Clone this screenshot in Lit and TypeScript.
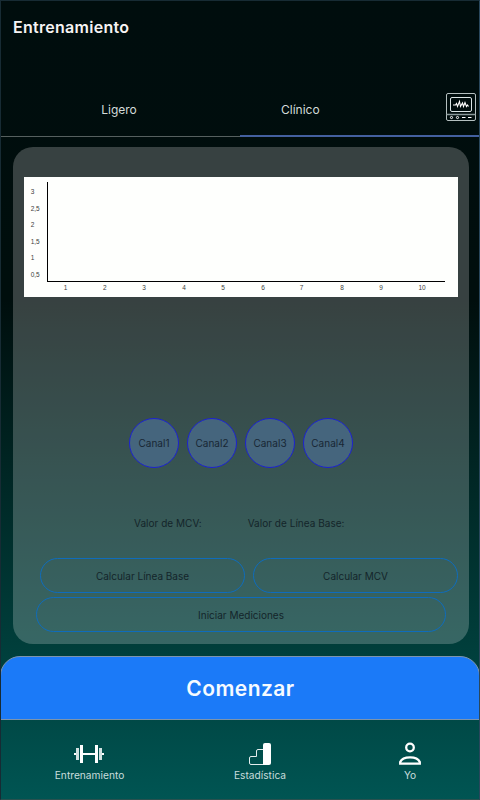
import { LitElement, html, svg, css } from "lit";
import { customElement } from "lit/decorators.js";

const channels = ["Canal1", "Canal2", "Canal3", "Canal4"];
const yTicks = [
  { label: "3", y: 17 },
  { label: "2,5", y: 34 },
  { label: "2", y: 50 },
  { label: "1,5", y: 67 },
  { label: "1", y: 83 },
  { label: "0,5", y: 100 },
];
const xTicks = [41.5, 80.8, 120, 160, 199, 239, 277.5, 318, 357, 398];

@customElement("training-chart")
export class TrainingChart extends LitElement {
  static styles = css`
    :host { display: block; height: 120px; background: #fefffd; }
    svg { display: block; }
    text { font: 500 6.5px "Liberation Sans", sans-serif; fill: #3c3c3c; }
    .axis { fill: #000; }
    .x { text-anchor: middle; }
  `;

  render() {
    return html`<svg width="434" height="120" viewBox="0 0 434 120">
      <rect class="axis" x="23" y="5" width="1" height="100"></rect>
      <rect class="axis" x="23" y="104" width="398" height="1"></rect>
      ${yTicks.map((t) => svg`<text x="6.7" y=${t.y}>${t.label}</text>`)}
      ${xTicks.map((x, i) => svg`<text class="x" x=${x} y="113">${i + 1}</text>`)}
    </svg>`;
  }
}

@customElement("app-root")
export class AppRoot extends LitElement {
  static styles = css`
    :host {
      display: flex;
      flex-direction: column;
      box-sizing: border-box;
      width: 480px;
      height: 800px;
      overflow: hidden;
      position: relative;
      font-family: Inter, sans-serif;
      color: #fff;
      background: linear-gradient(#000d0d 0, #000e0d 300px, #003d3a 640px, #005553 800px);
    }
    .frame {
      position: absolute;
      inset: 0;
      pointer-events: none;
      border: 1px solid #172b34;
      border-right-color: #29475c;
      border-bottom-color: #29514f;
    }
    * { box-sizing: border-box; }
    svg { display: block; }
    h1 {
      margin: 0;
      height: 83px;
      padding: 17px 13px 0;
      font-size: 16px;
      line-height: 20px;
      font-weight: 600;
      letter-spacing: 0.28px;
      color: #f6f3f3;
    }
    .tabs { display: flex; height: 54px; }
    .tab {
      width: 240px;
      display: flex;
      align-items: center;
      justify-content: center;
      font-size: 12px;
      color: #d3dcda;
      border-bottom: 1px solid #56605f;
    }
    .tab.left { padding-right: 2px; }
    .tab.active {
      border-bottom: 2px solid #43609f;
      justify-content: space-between;
      padding: 1px 4px 0 41px;
    }
    .tab svg { margin-bottom: 6px; }
    .card {
      margin: 10px 11px 0 13px;
      padding: 30px 11px 0;
      height: 497px;
      border-radius: 20px;
      background: rgba(255, 255, 255, 0.215);
      display: flex;
      flex-direction: column;
      color: #14252a;
      font-size: 10px;
    }
    .channels { display: flex; gap: 8px; margin: 121px 0 0 105px; }
    .channel {
      width: 50px;
      height: 50px;
      border: 1px solid #1c22d0;
      border-radius: 50%;
      background: #45657d;
      display: flex;
      align-items: center;
      justify-content: center;
      color: #182734;
      letter-spacing: 0.03px;
    }
    .values { display: flex; gap: 46px; margin: 48px 0 0 110px; line-height: 15px; white-space: nowrap; letter-spacing: 0.03px; }
    .row { display: flex; gap: 8px; margin: 27px 0 0 16px; }
    .pill {
      height: 35px;
      border: 1px solid #0f6cbc;
      border-radius: 18px;
      display: flex;
      align-items: center;
      justify-content: center;
      width: 205px;
      padding-top: 1px;
    }
    .wide { width: 410px; margin: 4px 0 0 12px; }
    .start {
      margin-top: 12px;
      height: 64px;
      border: 1px solid #7d94ad;
      border-radius: 20px 20px 0 0;
      background: #1b7af8;
      display: flex;
      align-items: center;
      justify-content: center;
      font-size: 21px;
      font-weight: 600;
      letter-spacing: 0.45px;
      padding-left: 1px;
      color: #f6fbff;
    }
    nav { display: grid; grid-template-columns: 179px 162px 138px; height: 80px; }
    .item {
      display: flex;
      flex-direction: column;
      align-items: center;
      padding-top: 22px;
      font-size: 10.2px;
      line-height: 14px;
      color: #c8dddc;
    }
    .item svg { margin-bottom: 2px; }
    .item .dumbbell { margin-right: 2px; }
  `;

  render() {
    return html`
      <h1>Entrenamiento</h1>
      <div class="tabs">
        <div class="tab left">Ligero</div>
        <div class="tab active">
          <span>Clínico</span>
          <svg width="30" height="28" viewBox="0 0 30 28" fill="none" stroke="#dbe5e5">
            <rect x=".5" y=".5" width="29" height="27" rx="1.5" stroke="#b4bfbf"></rect>
            <rect x="4.5" y="4.5" width="21" height="14" rx="1.5"></rect>
            <path d="M.5 21.5h29" stroke="#89999a" stroke-width="1.5"></path>
            <path d="M7 12h2.500l1-1.500 1 3 2-5 1 5 2-3.500 1 3.500 1.500-4 1.500 4 1-1.500 1 1.500" stroke="#fff" stroke-width="1.100"></path>
            <circle cx="5.500" cy="24.500" r="1.100" stroke="#fff"></circle>
            <circle cx="11.500" cy="24.500" r="1.100" stroke="#fff"></circle>
            <path d="M16 24.500h3.500M22 24.500h3.500" stroke="#fff"></path>
          </svg>
        </div>
      </div>
      <section class="card">
        <training-chart></training-chart>
        <div class="channels">${channels.map((c) => html`<div class="channel">${c}</div>`)}</div>
        <div class="values"><span>Valor de MCV:</span><span>Valor de Línea Base:</span></div>
        <div class="row">
          <div class="pill">Calcular Línea Base</div>
          <div class="pill">Calcular MCV</div>
        </div>
        <div class="pill wide">Iniciar Mediciones</div>
      </section>
      <div class="start">Comenzar</div>
      <nav>
        <div class="item">
          <svg class="dumbbell" width="30" height="24" viewBox="0 0 30 24" fill="#fff">
            <path d="M6 3h3v18H6zM21 3h3v18h-3zM9 11h12v2H9zM0 11h2v2H0zM28 11h2v2h-2z"></path>
            <path d="M2 6h3v12H2zM25 6h3v12h-3z" fill="#d2e1e1"></path>
          </svg>
          <span>Entrenamiento</span>
        </div>
        <div class="item">
          <svg width="22" height="24" viewBox="0 0 22 24">
            <path d="M.5 21V16Q.5 14.500 2 14.500H7.500V9Q7.500 7.500 9 7.500H14.500M.5 21Q.5 22.500 2 22.500H15" fill="none" stroke="#e4eeee"></path>
            <path d="M14 23V3Q14 1 16 1h4q2 0 2 2v18q0 2-2 2z" fill="#fff"></path>
          </svg>
          <span>Estadística</span>
        </div>
        <div class="item">
          <svg width="22" height="24" viewBox="0 0 22 24" fill="none" stroke="#fff" stroke-width="2.300">
            <circle cx="11" cy="5.500" r="3.800"></circle>
            <path d="M1.200 21.700V20C2.500 17 7 15.300 11 15.300S19.500 17 20.800 20V21.700Z"></path>
          </svg>
          <span>Yo</span>
        </div>
      </nav>
      <div class="frame"></div>
    `;
  }
}
